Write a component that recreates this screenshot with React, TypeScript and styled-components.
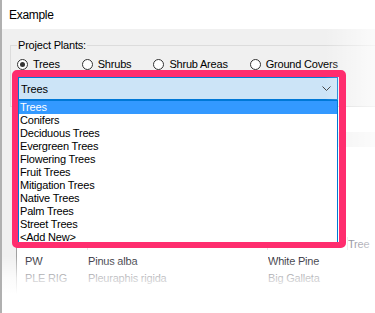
import React from "react";
import styled, { createGlobalStyle } from "styled-components";

const GlobalStyle = createGlobalStyle`
  html, body {
    margin: 0;
    padding: 0;
    background: #ffffff;
  }
  * {
    box-sizing: border-box;
  }
`;

const ACCENT = "#0078d7";
const HIGHLIGHT = "#ff2d6e";

const Window = styled.div`
  position: relative;
  width: 375px;
  height: 313px;
  overflow: hidden;
  border-left: 2px solid #b0b0b0;
  font-family: "Liberation Sans", Arial, sans-serif;
  font-size: 11px;
  letter-spacing: -0.2px;
  color: #000;
  display: flex;
  flex-direction: column;
`;

const TitleBar = styled.div`
  height: 29px;
  flex: none;
  display: flex;
  align-items: center;
  padding-left: 7px;
  background: #fff;
  font-size: 12px;
  letter-spacing: -0.3px;
`;

const Body = styled.div`
  flex: 1;
  background: #f0f0f0;
  padding: 10px 0 0 8px;
  display: flex;
  flex-direction: column;
`;

const GroupBox = styled.fieldset`
  margin: 0 -40px 0 0;
  padding: 6px 0 6px 6px;
  border: 1px solid #dcdcdc;
  min-width: 0;
`;

const Legend = styled.legend`
  padding: 0 1px;
  line-height: 13px;
`;

const RadioRow = styled.div`
  display: flex;
  align-items: center;
  gap: 22px;
  height: 13px;
`;

const Radio = styled.label`
  display: flex;
  align-items: center;
  gap: 5px;
  line-height: 13px;
  white-space: nowrap;
`;

const RadioCircle = styled.span<{ $checked?: boolean }>`
  width: 11px;
  height: 11px;
  border: 1px solid #333;
  border-radius: 50%;
  background: #fff;
  display: flex;
  align-items: center;
  justify-content: center;

  &::after {
    content: "";
    width: 5px;
    height: 5px;
    border-radius: 50%;
    background: ${({ $checked }) => ($checked ? "#333" : "transparent")};
  }
`;

const ComboWrap = styled.div`
  position: relative;
  margin: 6px 0 0 1px;
  width: 320px;
`;

const Combo = styled.div`
  height: 23px;
  display: flex;
  align-items: center;
  justify-content: space-between;
  padding: 0 6px 0 2px;
  background: #cce4f7;
  border: 1px solid ${ACCENT};
`;

const DropList = styled.ul`
  position: absolute;
  z-index: 2;
  top: 100%;
  left: 0;
  right: 0;
  margin: 0;
  padding: 0;
  list-style: none;
  background: #fff;
  border: 1px solid ${ACCENT};
`;

const Option = styled.li<{ $selected?: boolean }>`
  height: 13px;
  line-height: 13px;
  padding-left: 1px;
  white-space: nowrap;
  background: ${({ $selected }) => ($selected ? "#3399ff" : "transparent")};
  color: ${({ $selected }) => ($selected ? "#fff" : "#000")};
`;

// pink annotation frame drawn over the open combo box
const Callout = styled.div`
  position: absolute;
  z-index: 3;
  top: -7px;
  left: -6px;
  right: -8px;
  bottom: -148px;
  border-style: solid;
  border-color: ${HIGHLIGHT};
  border-width: 7px 7px 6px 6px;
  border-radius: 5px;
  pointer-events: none;
`;

const ListPanel = styled.div`
  flex: 1;
  margin: 0 0 0 6px;
  padding-top: 25px;
  background: #fff;
  border-left: 1px solid #a0a0a0;
  display: flex;
  flex-direction: column;
`;

const FilterBand = styled.div`
  height: 15px;
  background: #f3f3f3;
  margin-bottom: 88px;
`;

const GridRow = styled.div<{ $header?: boolean }>`
  display: grid;
  grid-template-columns: 63px 180px 80px 1fr;
  height: 17px;
  align-items: ${({ $header }) => ($header ? "end" : "center")};
  padding: ${({ $header }) => ($header ? "0 0 2px 8px" : "0 0 0 8px")};
  white-space: nowrap;
  color: ${({ $header }) => ($header ? "#5d5d70" : "#1c1c2c")};
`;

const HeaderCell = styled.span`
  height: 13px;
  line-height: 13px;
  border-right: 1px solid #e5e5e5;
`;

const Cell = styled.span`
  overflow: hidden;
`;

const FadeBottom = styled.div`
  position: absolute;
  z-index: 1;
  left: 0;
  right: 0;
  top: 256px;
  bottom: 0;
  pointer-events: none;
  background: linear-gradient(
    to bottom,
    rgba(255, 255, 255, 0) 0px,
    rgba(255, 255, 255, 0.75) 22px,
    #fff 38px
  );
`;

const FadeRight = styled.div`
  position: absolute;
  z-index: 1;
  top: 0;
  bottom: 0;
  right: 0;
  width: 50px;
  pointer-events: none;
  background: linear-gradient(to right, rgba(255, 255, 255, 0), rgba(255, 255, 255, 0.7));
`;

const Chevron = () => (
  <svg width="9" height="5" viewBox="0 0 9 5">
    <path d="M0.5 0.5 L4.5 4.5 L8.5 0.5" fill="none" stroke="#444" strokeWidth="1" />
  </svg>
);

const radios = [
  { label: "Trees", checked: true },
  { label: "Shrubs" },
  { label: "Shrub Areas" },
  { label: "Ground Covers" },
];

const options = [
  "Trees",
  "Conifers",
  "Deciduous Trees",
  "Evergreen Trees",
  "Flowering Trees",
  "Fruit Trees",
  "Mitigation Trees",
  "Native Trees",
  "Palm Trees",
  "Street Trees",
  "<Add New>",
];

const plants = [
  ["PW", "Pinus alba", "White Pine", ""],
  ["PLE RIG", "Pleuraphis rigida", "Big Galleta", ""],
];

export default function App() {
  return (
    <>
      <GlobalStyle />
      <Window>
        <TitleBar>Example</TitleBar>
        <Body>
          <GroupBox>
            <Legend>Project Plants:</Legend>
            <RadioRow>
              {radios.map(r => (
                <Radio key={r.label}>
                  <RadioCircle $checked={r.checked} />
                  {r.label}
                </Radio>
              ))}
            </RadioRow>
            <ComboWrap>
              <Combo>
                <span>Trees</span>
                <Chevron />
              </Combo>
              <DropList>
                {options.map((o, i) => (
                  <Option key={o} $selected={i === 0}>{o}</Option>
                ))}
              </DropList>
              <Callout />
            </ComboWrap>
          </GroupBox>
          <ListPanel>
            <FilterBand />
            <GridRow $header>
              <HeaderCell />
              <HeaderCell />
              <HeaderCell />
              <Cell>Tree</Cell>
            </GridRow>
            {plants.map(p => (
              <GridRow key={p[0]}>
                {p.map((c, i) => <Cell key={i}>{c}</Cell>)}
              </GridRow>
            ))}
          </ListPanel>
        </Body>
        <FadeRight />
        <FadeBottom />
      </Window>
    </>
  );
}
